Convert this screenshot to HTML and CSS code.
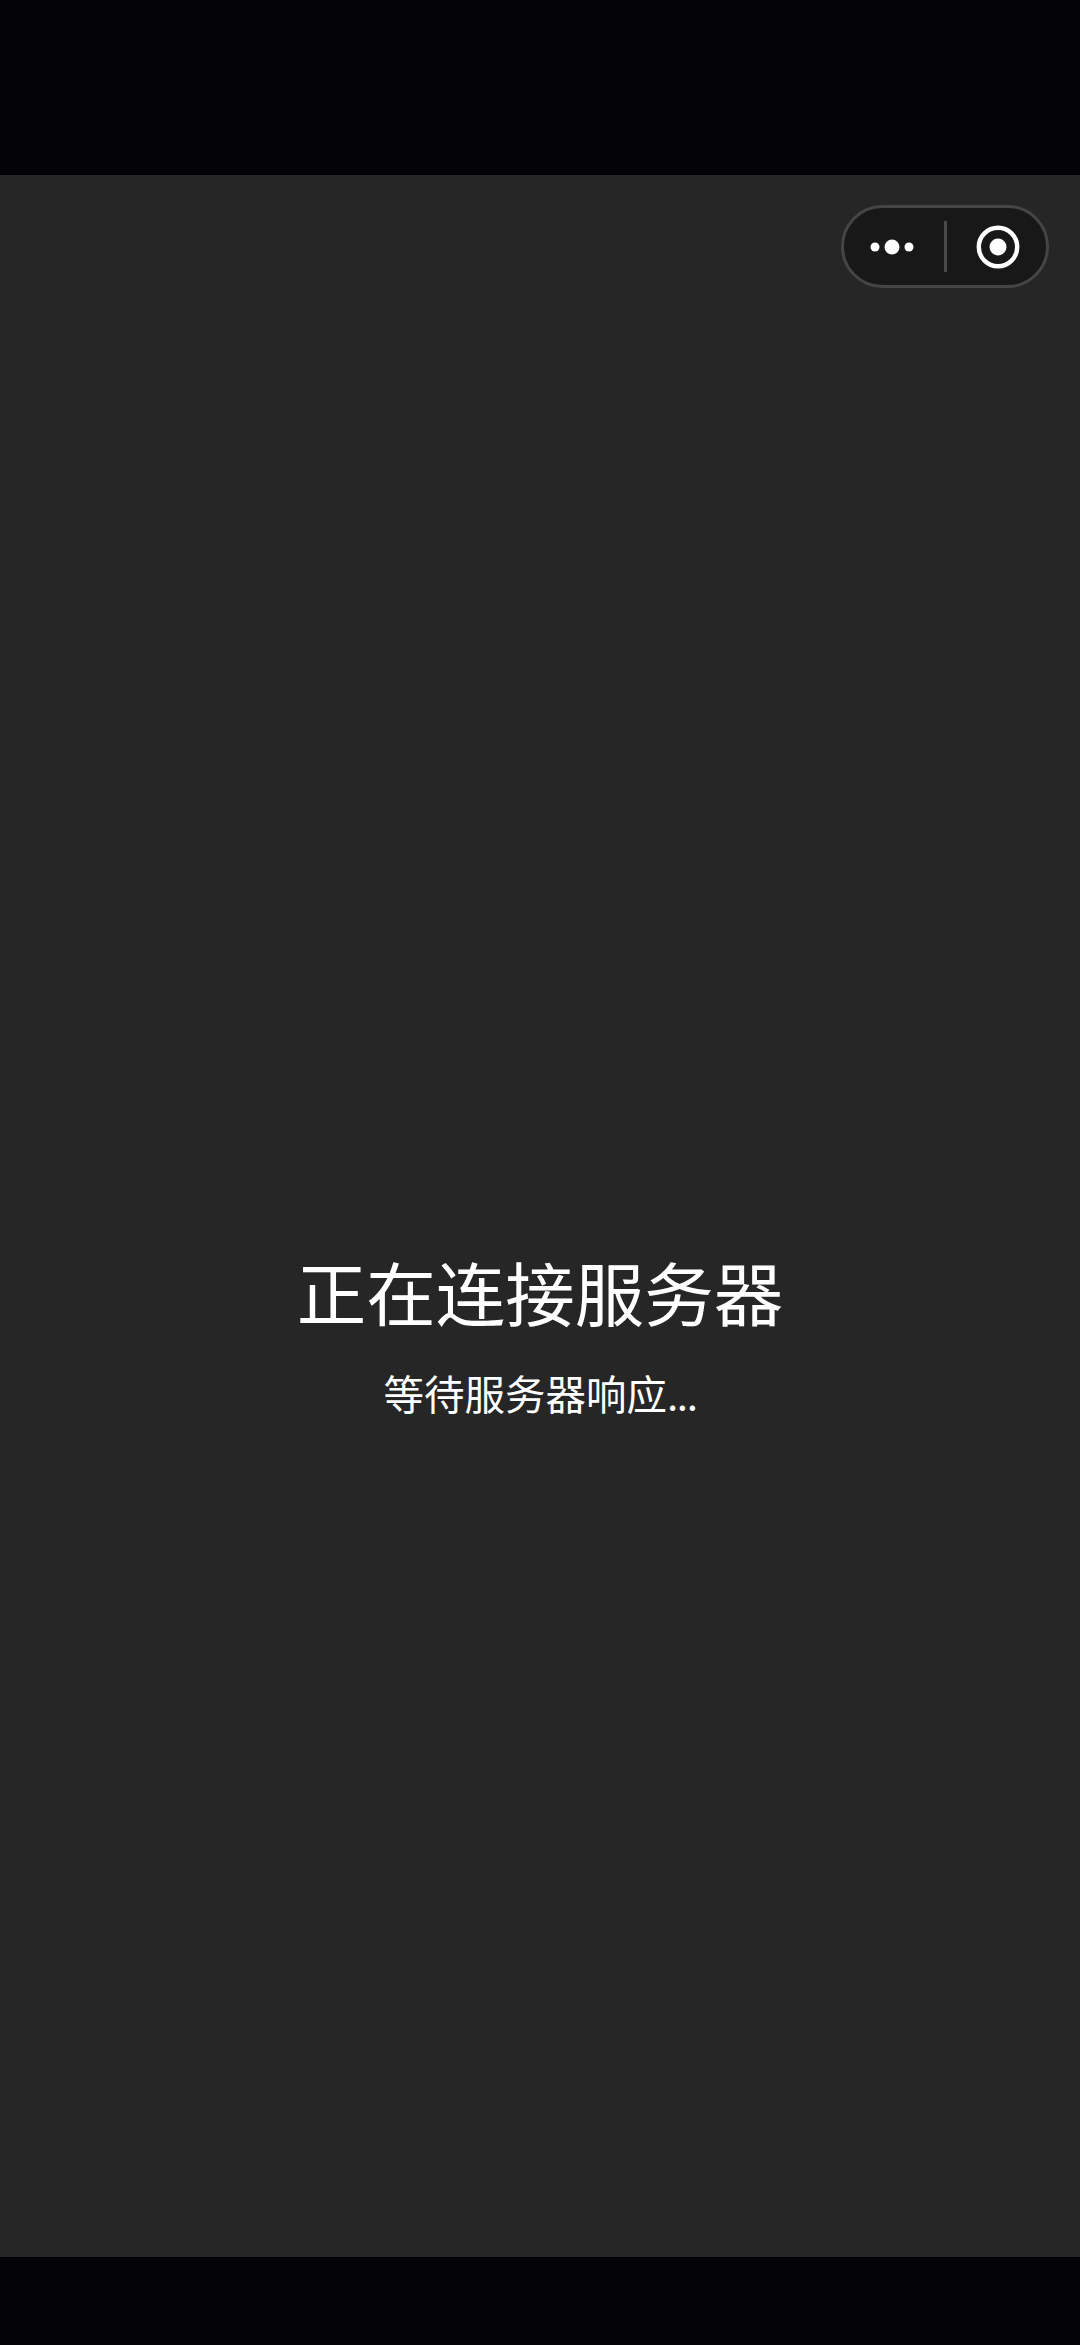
FILE: index.html
```html
<!DOCTYPE html>
<html>
<head>
    <title>正在连接服务器</title>
    <link rel="stylesheet" href="styles.css">
</head>
<body>
    <div class="status-bar"></div>
    <main class="screen">
        <div class="capsule-row">
            <div class="capsule">
                <svg class="capsule-icon" width="102" height="50" viewBox="0 0 102 50">
                    <circle cx="31" cy="25" r="4.5" fill="#fff"/>
                    <circle cx="48" cy="25" r="7.5" fill="#fff"/>
                    <circle cx="65" cy="25" r="4.5" fill="#fff"/>
                </svg>
                <div class="capsule-divider"></div>
                <svg class="capsule-icon" width="102" height="50" viewBox="0 0 102 50">
                    <circle cx="51" cy="25" r="19.2" fill="none" stroke="#fff" stroke-width="4.4"/>
                    <circle cx="51" cy="25" r="8.5" fill="#fff"/>
                </svg>
            </div>
        </div>
        <div class="message">
            <h1>正在连接服务器</h1>
            <p>等待服务器响应<span class="dots">...</span></p>
        </div>
    </main>
    <div class="nav-bar"></div>
</body>
</html>
```

FILE: styles.css
```css
html, body {
    height: 100%;
}
body {
    margin: 0;
    display: flex;
    flex-direction: column;
    background: #040406;
    font-family: "Noto Sans CJK SC", "Noto Sans", sans-serif;
    color: #fff;
}
.status-bar {
    height: 175px;
    background: #030305;
}
.nav-bar {
    height: 88px;
    background: #040406;
}
.screen {
    flex: 1;
    background: #262626;
}
.capsule-row {
    display: flex;
    justify-content: flex-end;
    padding: 30px 31px 0 0;
}
.capsule {
    box-sizing: border-box;
    width: 208px;
    height: 83px;
    display: flex;
    align-items: center;
    border: 3px solid #454545;
    border-radius: 42px;
    background: #181818;
}
.capsule-divider {
    width: 3px;
    height: 51px;
    flex-shrink: 0;
    margin-left: -2px;
    background: #4a4a4a;
}
.capsule-icon {
    flex-shrink: 0;
}
.message {
    margin-top: 953px;
    text-align: center;
}
.message h1 {
    margin: 0 0 22px;
    font-size: 69.5px;
    font-weight: 400;
    line-height: 100px;
}
.message p {
    margin: 0;
    font-size: 40.5px;
    line-height: 60px;
}
.dots {
    letter-spacing: -1.5px;
}
```
